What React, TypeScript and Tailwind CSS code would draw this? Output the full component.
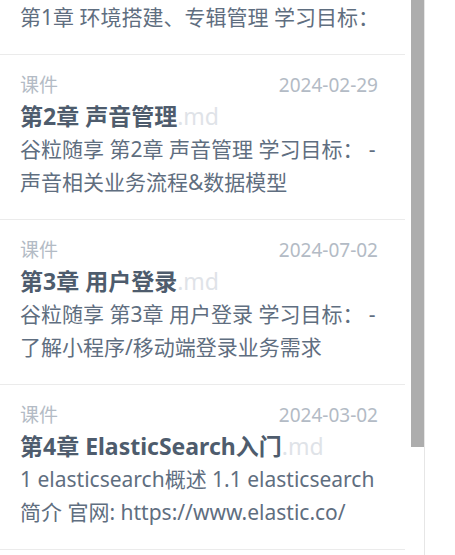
import React from "react";

type Doc = {
  kind: string;
  date: string;
  title: string;
  summary: string;
};

const docs: Doc[] = [
  {
    kind: "课件",
    date: "2024-02-29",
    title: "第2章 声音管理",
    summary: "谷粒随享 第2章 声音管理 学习目标： - 声音相关业务流程&数据模型",
  },
  {
    kind: "课件",
    date: "2024-07-02",
    title: "第3章 用户登录",
    summary: "谷粒随享 第3章 用户登录 学习目标： - 了解小程序/移动端登录业务需求",
  },
  {
    kind: "课件",
    date: "2024-03-02",
    title: "第4章 ElasticSearch入门",
    summary: "1 elasticsearch概述 1.1 elasticsearch 简介 官网: https://www.elastic.co/",
  },
];

const font = { fontFamily: '"Noto Sans", "Noto Sans CJK SC", sans-serif' };

function DocItem({ doc }: { doc: Doc }) {
  return (
    <div className="border-b border-[#ebebeb] pl-5 pr-[27px] pt-4 pb-5">
      <div className="flex items-center justify-between h-7 text-[19px] text-[#b3bbc5]">
        <span>{doc.kind}</span>
        <span>{doc.date}</span>
      </div>
      <div className="h-[34px] leading-[34px] text-[23px] whitespace-nowrap">
        <span className="font-bold text-[#4e5c6d]">{doc.title}</span>
        <span className="text-[#dfe3e8]">.md</span>
      </div>
      <p className="text-[21px] leading-[33px] text-[#5f6e80]">{doc.summary}</p>
    </div>
  );
}

export default function App() {
  return (
    <div className="w-[455px] h-[555px] bg-white flex overflow-hidden" style={font}>
      <div className="w-[425px] h-full flex border-r border-[#e6e6e6]">
        <div className="w-[405px] h-full overflow-hidden">
          {/* list is scrolled: only the tail of the first item shows */}
          <div className="border-b border-[#ebebeb] pl-5 pr-[27px] pt-px pb-5">
            <p className="text-[21px] leading-[33px] text-[#5f6e80] whitespace-nowrap">
              第1章 环境搭建、专辑管理 学习目标：
            </p>
          </div>
          {docs.map((d) => (
            <DocItem key={d.title} doc={d} />
          ))}
        </div>
        <div className="flex-1 flex justify-end">
          <div className="w-[13px] h-[447px] bg-[#adadad]" />
        </div>
      </div>
    </div>
  );
}
